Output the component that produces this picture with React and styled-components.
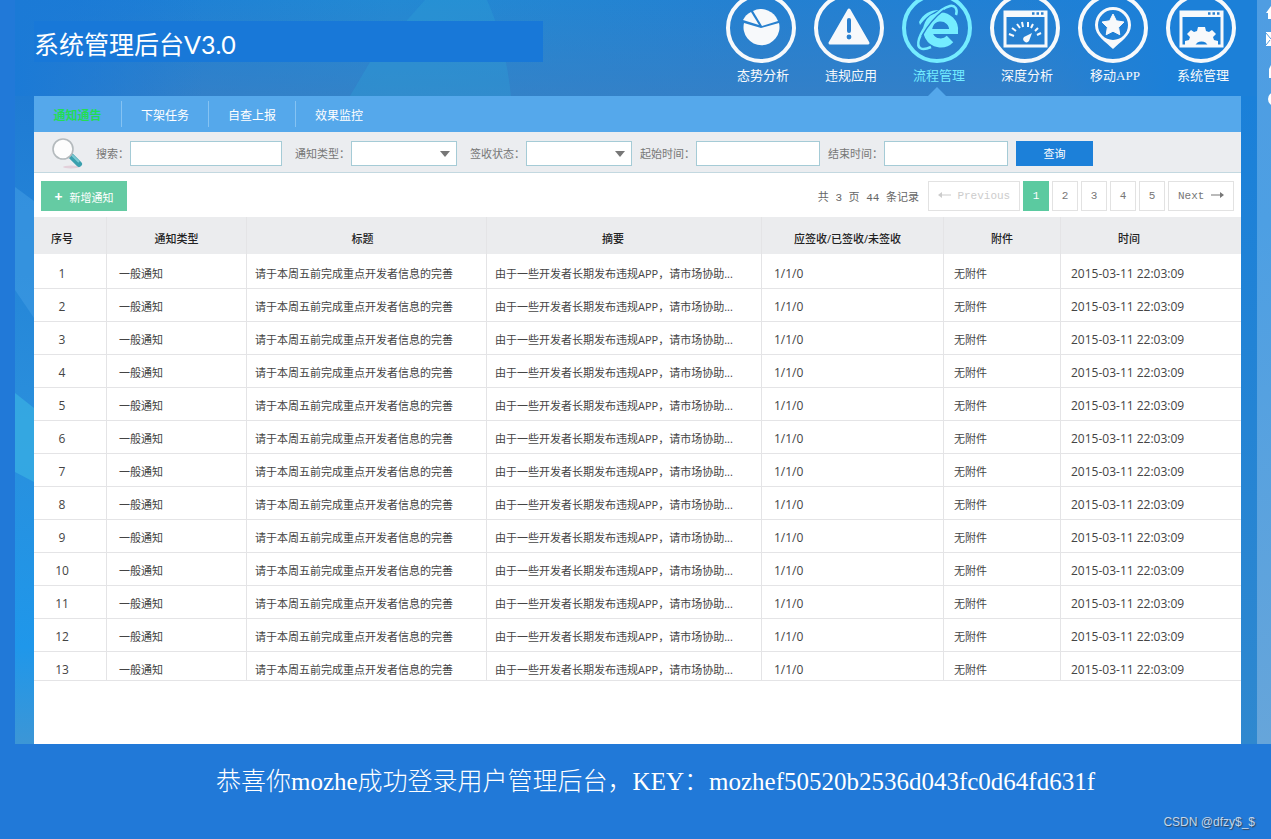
import React, { useState } from "react"
import styled, { createGlobalStyle } from "styled-components"

const columns = [
  { title: "序号", width: 72, trim: 16, pad: 0, center: true, numeric: true },
  { title: "通知类型", width: 140, trim: 0, pad: 12 },
  { title: "标题", width: 240, trim: 8, pad: 8 },
  { title: "摘要", width: 275, trim: 22, pad: 8 },
  { title: "应签收/已签收/未签收", width: 182, trim: 10, pad: 12, numeric: true },
  { title: "附件", width: 117, trim: 0, pad: 10 },
  { title: "时间", width: 181, trim: 44, pad: 10, numeric: true },
]

const total = columns.reduce((sum, c) => sum + c.width, 0)

const rows = Array.from({ length: 13 }, (_, i) => [
  i + 1,
  "一般通知",
  "请于本周五前完成重点开发者信息的完善",
  "由于一些开发者长期发布违规APP，请市场协助...",
  "1/1/0",
  "无附件",
  "2015-03-11 22:03:09",
])

const PieIcon = () => (
  <>
    <path d="M35 28 L18 23 A18 18 0 1 0 53 23 Z" />
    <path d="M36 26 L27 11 A18 18 0 0 1 52 21 Z" />
    <path d="M33 25 L25 12 A17 17 0 0 0 17 20 Z" />
  </>
)

const WarnIcon = () => (
  <>
    <path
      d="M35 10 L54 43 H16 Z"
      stroke="currentColor"
      strokeWidth="3"
      strokeLinejoin="round"
    />
    <rect x="33" y="18" width="4" height="15" rx="2" fill="#2a80cf" />
    <circle cx="35" cy="37" r="2.4" fill="#2a80cf" />
  </>
)

const swoosh = "M29 47 C20 51 14 49 17 39 C21 27 36 9 48 6 C53 5 56 9 54 15"

const BrowserIcon = () => (
  <>
    <path d={swoosh} fill="none" stroke="currentColor" strokeWidth="2.5" />
    <path
      d="M51.5 32 A13 13 0 1 0 48 39"
      fill="none"
      stroke="currentColor"
      strokeWidth="9"
    />
    <rect x="30" y="29" width="26" height="5" />
    <path d="M20 36 C26 25 34 16 42 10" fill="none" stroke="#2a80cf" strokeWidth="1.5" />
    <path d="M17 22 C21 14 28 10 37 10 C29 13 23 18 18 25 Z" />
  </>
)

const WindowFrame = () => (
  <>
    <rect
      x="15"
      y="12"
      width="41"
      height="34"
      fill="none"
      stroke="currentColor"
      strokeWidth="3"
    />
    <rect x="14" y="11" width="43" height="6" />
    <path
      d="M42 13.5 h2.5 M46.5 13.5 h2.5 M51 13.5 h2.5"
      stroke="#2a80cf"
      strokeWidth="2.5"
    />
  </>
)

const GaugeIcon = () => (
  <>
    <WindowFrame />
    <path
      d="M19 34 l5 2 M22 28 l4 3 M27 24 l3 4 M32 22 l1 5 M38 22 v5 M43 24 l-2 4 M48 28 l-3 3 M51 33 l-4 2"
      stroke="currentColor"
      strokeWidth="2"
    />
    <path d="M42 33 L39 41 A3 3 0 1 1 34 37 Z" />
  </>
)

const PinIcon = () => (
  <>
    <path
      fillRule="evenodd"
      d="M35 7 A18 18 0 0 1 53 25 C53 36 42 42 35 49 C28 42 17 36 17 25 A18 18 0 0 1 35 7 Z M35 10 A15 15 0 1 0 35 40 A15 15 0 1 0 35 10 Z"
    />
    <path
      d="M35 14 L38.4 20.8 L46 22 L40.6 27.3 L41.8 34.7 L35 31.2 L28.2 34.7 L29.4 27.3 L24 22 L31.6 20.8 Z"
      stroke="currentColor"
      strokeLinejoin="round"
    />
  </>
)

const GearIcon = () => (
  <>
    <WindowFrame />
    <path d="M19 46 V41 L23 40 L24 37 L21 34 L25 30 L28 32 L31 31 L32 27 H39 L40 31 L43 32 L46 30 L50 34 L47 37 L48 40 L52 41 V46 H42 A7 7 0 0 0 29 46 Z" />
  </>
)

const menu = [
  { label: "态势分析", Icon: PieIcon },
  { label: "违规应用", Icon: WarnIcon },
  { label: "流程管理", Icon: BrowserIcon },
  { label: "深度分析", Icon: GaugeIcon },
  { label: "移动APP", Icon: PinIcon },
  { label: "系统管理", Icon: GearIcon },
]

const tabs = ["通知通告", "下架任务", "自查上报", "效果监控"]

const Backdrop = () => (
  <BackdropStyled viewBox="0 0 1256 744" preserveAspectRatio="none">
    <defs>
      <linearGradient id="sky" x1="0" y1="0" x2="1" y2="0">
        <stop offset="0" stopColor="#1b7ad6" />
        <stop offset="0.3" stopColor="#2389d3" />
        <stop offset="0.6" stopColor="#2480d1" />
        <stop offset="1" stopColor="#1c80d8" />
      </linearGradient>
      <linearGradient id="shade" x1="0" y1="0" x2="0" y2="1">
        <stop offset="0" stopColor="#3a80c4" stopOpacity="0" />
        <stop offset="1" stopColor="#3a80c4" stopOpacity="0.7" />
      </linearGradient>
      <linearGradient id="fade" x1="0" y1="0" x2="1" y2="0">
        <stop offset="0" stopColor="#1b7ad6" />
        <stop offset="0.15" stopColor="#1b7ad6" stopOpacity="0" />
        <stop offset="0.8" stopColor="#1c80d8" stopOpacity="0" />
        <stop offset="0.92" stopColor="#1c80d8" />
      </linearGradient>
      <linearGradient id="left" x1="0" y1="0" x2="0" y2="1">
        <stop offset="0" stopColor="#1f7bd3" />
        <stop offset="0.5" stopColor="#2a8fdc" />
        <stop offset="0.85" stopColor="#1f97ea" />
        <stop offset="1" stopColor="#3c96d6" />
      </linearGradient>
      <linearGradient id="right" x1="0" y1="0" x2="0" y2="1">
        <stop offset="0" stopColor="#1a80d9" />
        <stop offset="1" stopColor="#2f88cf" />
      </linearGradient>
    </defs>
    <rect width="1256" height="744" fill="url(#sky)" />
    <rect width="1256" height="96" fill="url(#shade)" />
    <rect width="1256" height="96" fill="url(#fade)" />
    <path d="M410 0 H472 Q490 40 496 96 H335 L355 62 Z" fill="#2fa0d6" opacity="0.35" />
    <rect y="96" width="19" height="648" fill="url(#left)" />
    <rect x="1226" y="96" width="16" height="648" fill="url(#right)" />
    <path d="M0 187 L19 201 V318 L0 290 Z" fill="#3f9be2" opacity="0.6" />
    <path d="M0 393 L19 408 V482 L0 472 Z" fill="#37ace2" opacity="0.8" />
  </BackdropStyled>
)

const Magnifier = () => (
  <svg width="32" height="32" viewBox="0 0 32 32" aria-hidden="true">
    <ellipse cx="20" cy="30" rx="8" ry="1.5" fill="#e3d0da" />
    <path d="M20 19 L28 27" stroke="#3aa0ae" strokeWidth="6" strokeLinecap="round" />
    <path d="M21 18 L28 25" stroke="#7cc9d2" strokeWidth="2" />
    <circle cx="12" cy="12" r="10" fill="#fdfdfd" stroke="#b4babd" strokeWidth="1.6" />
  </svg>
)

const Field = ({ id, label, children }) => (
  <FieldStyled>
    <label htmlFor={id}>{label}：</label>
    {children}
  </FieldStyled>
)

export default function App() {
  const [activeMenu, setActiveMenu] = useState(2)
  const [activeTab, setActiveTab] = useState(0)
  const [page, setPage] = useState(1)

  return (
    <>
      <GlobalStyle />
      <ScreenStyled>
        <Backdrop />
        <MainStyled>
          <HeaderStyled>
            <TitleStyled>系统管理后台V3.0</TitleStyled>
            <MenuStyled>
              {menu.map(({ label, Icon }, i) => (
                <MenuItemStyled
                  key={label}
                  $active={i === activeMenu}
                  onClick={() => setActiveMenu(i)}
                >
                  <svg width="72" height="64" viewBox="0 0 72 64" fill="currentColor">
                    <circle
                      cx="36"
                      cy="28"
                      r="33"
                      fill="none"
                      stroke="currentColor"
                      strokeWidth="4"
                    />
                    <g transform="translate(1 0)">
                      <Icon />
                    </g>
                  </svg>
                  <span>{label}</span>
                </MenuItemStyled>
              ))}
            </MenuStyled>
          </HeaderStyled>

          <PanelStyled>
            <TabsStyled>
              {tabs.map((tab, i) => (
                <TabStyled
                  key={tab}
                  $active={i === activeTab}
                  onClick={() => setActiveTab(i)}
                >
                  {tab}
                </TabStyled>
              ))}
            </TabsStyled>

            <FilterStyled>
              <Magnifier />
              <FieldsStyled>
                <Field id="keyword" label="搜索">
                  <InputStyled id="keyword" $width={152} />
                </Field>
                <Field id="type" label="通知类型">
                  <SelectBoxStyled>
                    <select id="type" />
                  </SelectBoxStyled>
                </Field>
                <Field id="status" label="签收状态">
                  <SelectBoxStyled>
                    <select id="status" />
                  </SelectBoxStyled>
                </Field>
              </FieldsStyled>
              <Field id="start" label="起始时间">
                <InputStyled id="start" $width={124} />
              </Field>
              <Field id="end" label="结束时间">
                <InputStyled id="end" $width={124} />
              </Field>
              <QueryStyled>查询</QueryStyled>
            </FilterStyled>

            <ToolbarStyled>
              <AddStyled>
                <b>+</b>新增通知
              </AddStyled>
              <PagerStyled>
                <span>共 3 页 44 条记录</span>
                <PageStyled $width={92} disabled>
                  <Arrow left /> Previous
                </PageStyled>
                {[1, 2, 3, 4, 5].map((n) => (
                  <PageStyled
                    key={n}
                    $width={26}
                    $active={n === page}
                    onClick={() => setPage(n)}
                  >
                    {n}
                  </PageStyled>
                ))}
                <PageStyled $width={66}>
                  Next <Arrow />
                </PageStyled>
              </PagerStyled>
            </ToolbarStyled>

            <TableStyled>
              <colgroup>
                {columns.map((c) => (
                  <col key={c.title} style={{ width: `${(c.width / total) * 100}%` }} />
                ))}
              </colgroup>
              <thead>
                <tr>
                  {columns.map((c) => (
                    <HeadCellStyled key={c.title} $trim={c.trim}>
                      {c.title}
                    </HeadCellStyled>
                  ))}
                </tr>
              </thead>
              <tbody>
                {rows.map((row) => (
                  <tr key={row[0]}>
                    {row.map((value, i) => (
                      <CellStyled
                        key={columns[i].title}
                        $pad={columns[i].pad}
                        $trim={columns[i].center ? columns[i].trim : 0}
                        $center={columns[i].center}
                        $numeric={columns[i].numeric}
                      >
                        {value}
                      </CellStyled>
                    ))}
                  </tr>
                ))}
              </tbody>
            </TableStyled>
          </PanelStyled>
        </MainStyled>
        <Rail />
      </ScreenStyled>

      <FooterStyled>
        <p>恭喜你mozhe成功登录用户管理后台，KEY：mozhef50520b2536d043fc0d64fd631f</p>
        <small>CSDN @dfzy$_$</small>
      </FooterStyled>
    </>
  )
}

const Arrow = ({ left }) => (
  <svg width="13" height="8" viewBox="0 0 13 8" fill="currentColor">
    <path d={left ? "M0 4 L4 1 V3.4 H13 V4.6 H4 V7 Z" : "M13 4 L9 1 V3.4 H0 V4.6 H9 V7 Z"} />
  </svg>
)

const Rail = () => (
  <RailStyled>
    <svg width="14" height="110" viewBox="0 0 14 110" fill="#fff">
      <path d="M9 13 L14 6 V19 H11 V13 Z" />
      <path d="M9 32 H14 V46 H9 Z" />
      <path d="M9 33 L14 39 M9 45 L13 40" stroke="#4f9de2" />
      <path d="M12 69 L14 65 V78 H12 Z" />
      <circle cx="18" cy="99" r="7" />
    </svg>
  </RailStyled>
)

const GlobalStyle = createGlobalStyle`
  * {
    box-sizing: border-box;
  }
  body {
    margin: 0;
    background: #2179d8;
    font-family: "Open Sans", "Noto Sans CJK SC", sans-serif;
    font-size: 11px;
  }
  button, input, select {
    font: inherit;
    border: 0;
    padding: 0;
    border-radius: 0;
  }
  button {
    cursor: pointer;
  }
`

const ScreenStyled = styled.div`
  position: relative;
  display: flex;
  margin-left: 15px;
  overflow: hidden;
`

const BackdropStyled = styled.svg`
  position: absolute;
  inset: 0;
  width: 100%;
  height: 100%;
  z-index: -1;
`

const MainStyled = styled.main`
  flex: 1;
  min-width: 0;
  padding: 0 16px 0 19px;
`

const RailStyled = styled.aside`
  width: 14px;
  background: linear-gradient(#4f9de2, #4d9fe3 30%, #66a5da);
`

const HeaderStyled = styled.header`
  display: flex;
  align-items: flex-start;
  justify-content: space-between;
  height: 96px;
  margin-right: -4px;
`

const TitleStyled = styled.h1`
  flex: 0 1 509px;
  margin: 21px 0 0;
  padding-top: 5px;
  line-height: 36px;
  background: #1878d8;
  color: #fff;
  font-family: Lato, "Noto Sans CJK SC", sans-serif;
  font-size: 25px;
  font-weight: 400;
`

const MenuStyled = styled.nav`
  display: flex;
`

const MenuItemStyled = styled.button`
  position: relative;
  display: flex;
  flex-direction: column;
  align-items: center;
  width: 88px;
  height: 96px;
  background: none;
  color: ${({ $active }) => ($active ? "#74ecff" : "#f7f9fb")};
  font-family: "Liberation Serif", "Noto Sans CJK SC", serif;
  font-size: 13px;
  line-height: 24px;
  span {
    padding-left: 4px;
  }
  &::after {
    content: "";
    display: ${({ $active }) => ($active ? "block" : "none")};
    position: absolute;
    bottom: 0;
    border: 9px solid transparent;
    border-top: 0;
    border-bottom-color: #55a8eb;
  }
`

const PanelStyled = styled.section`
  background: #fff;
  padding-bottom: 63px;
`

const TabsStyled = styled.nav`
  display: flex;
  height: 36px;
  padding: 5px 0;
  background: #55a8eb;
`

const TabStyled = styled.button`
  width: 87px;
  padding-top: 2px;
  background: none;
  color: ${({ $active }) => ($active ? "#22dd55" : "#fff")};
  font-size: 12px;
  font-weight: ${({ $active }) => ($active ? 700 : 400)};
  & + & {
    border-left: 1px solid #85c3f3;
  }
`

const FilterStyled = styled.div`
  display: flex;
  align-items: center;
  gap: 8px;
  height: 41px;
  padding: 2px 0 0 17px;
  background: #ebedf0;
  border-bottom: 1px solid #c3d8e0;
`

const FieldsStyled = styled.div`
  display: flex;
  gap: 13px;
  padding-left: 5px;
`

const FieldStyled = styled.div`
  display: flex;
  align-items: center;
  color: #777;
  label {
    padding-right: 1px;
    white-space: nowrap;
  }
`

const InputStyled = styled.input`
  width: ${({ $width }) => $width}px;
  height: 25px;
  border: 1px solid #a5cbd6;
  background: #fff;
`

const SelectBoxStyled = styled.div`
  position: relative;
  select {
    display: block;
    appearance: none;
    width: 106px;
    height: 25px;
    border: 1px solid #a5cbd6;
    background: #fff;
  }
  &::after {
    content: "";
    position: absolute;
    right: 7px;
    top: 10px;
    border: 5px solid transparent;
    border-top: 6px solid #777;
    border-bottom: 0;
    pointer-events: none;
  }
`

const QueryStyled = styled.button`
  width: 77px;
  height: 25px;
  background: #1c80d9;
  color: #fff;
`

const ToolbarStyled = styled.div`
  display: flex;
  align-items: center;
  justify-content: space-between;
  height: 44px;
  padding: 2px 7px 0;
`

const AddStyled = styled.button`
  width: 86px;
  height: 30px;
  background: #65cba3;
  color: #fff;
  b {
    margin-right: 7px;
    font-size: 14px;
  }
`

const PagerStyled = styled.div`
  display: flex;
  align-items: center;
  gap: 3px;
  color: #666;
  font-family: "Liberation Mono", "Noto Sans CJK SC", monospace;
  span {
    margin-right: 6px;
  }
`

const PageStyled = styled.button`
  width: ${({ $width }) => $width}px;
  height: 30px;
  border: 1px solid ${({ $active }) => ($active ? "#5bcaa0" : "#e2e2e2")};
  background: ${({ $active }) => ($active ? "#5bcaa0" : "#fff")};
  color: ${({ $active }) => ($active ? "#fff" : "#777")};
  &:disabled {
    color: #ccc;
  }
`

const TableStyled = styled.table`
  width: 100%;
  table-layout: fixed;
  border-collapse: separate;
  border-spacing: 0;
  th + th,
  td + td {
    border-left: 1px solid #e4e4e6;
  }
  tbody tr:first-child td {
    padding-top: 12px;
  }
  tbody tr:last-child td {
    padding-bottom: 2px;
  }
`

const HeadCellStyled = styled.th`
  height: 37px;
  padding: 4px ${({ $trim }) => $trim}px 0 0;
  background: #ebecee;
  color: #222;
  font-weight: 500;
  white-space: nowrap;
`

const CellStyled = styled.td`
  padding: 10px ${({ $trim }) => $trim}px 6px ${({ $pad }) => $pad}px;
  border-bottom: 1px solid #e4e4e6;
  color: #444;
  font-size: ${({ $numeric }) => ($numeric ? 12 : 11)}px;
  line-height: 16px;
  text-align: ${({ $center }) => ($center ? "center" : "left")};
  vertical-align: top;
  white-space: nowrap;
  overflow: hidden;
`

const FooterStyled = styled.footer`
  display: flex;
  flex-direction: column;
  gap: 16px;
  padding: 22px 16px 9px;
  color: #fff;
  p {
    margin: 0;
    padding-left: 40px;
    font-family: "Liberation Serif", "Noto Sans CJK SC", serif;
    font-size: 25px;
    font-weight: 300;
    line-height: 32px;
    text-align: center;
  }
  small {
    color: #c3d6ea;
    font-family: "Liberation Sans", sans-serif;
    font-size: 12px;
    line-height: 16px;
    text-align: right;
    text-shadow: 1px 1px 1px #345;
  }
`
